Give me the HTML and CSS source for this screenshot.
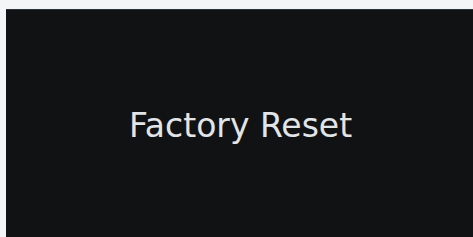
FILE: index.html
```html
<!DOCTYPE html>
<html>
<head>
<meta charset="utf-8">
<link rel="stylesheet" href="styles.css">
</head>
<body>
<div class="screen">
  <div class="label">Factory Reset</div>
</div>
</body>
</html>
```
FILE: styles.css
```css
html, body {
  margin: 0;
  padding: 0;
  width: 473px;
  height: 237px;
  background: #f3f5f6;
  overflow: hidden;
}
body {
  padding: 9px 0 0 6px;
  box-sizing: border-box;
}
.screen {
  width: 100%;
  height: 100%;
  background: #111214;
  display: flex;
  align-items: center;
  justify-content: center;
  border-top: 1px solid #2a3038;
  box-sizing: border-box;
}
.label {
  font-family: "DejaVu Sans", sans-serif;
  font-size: 33px;
  color: #e2e5e8;
  margin-top: 3px;
  margin-left: 2px;
}
```
